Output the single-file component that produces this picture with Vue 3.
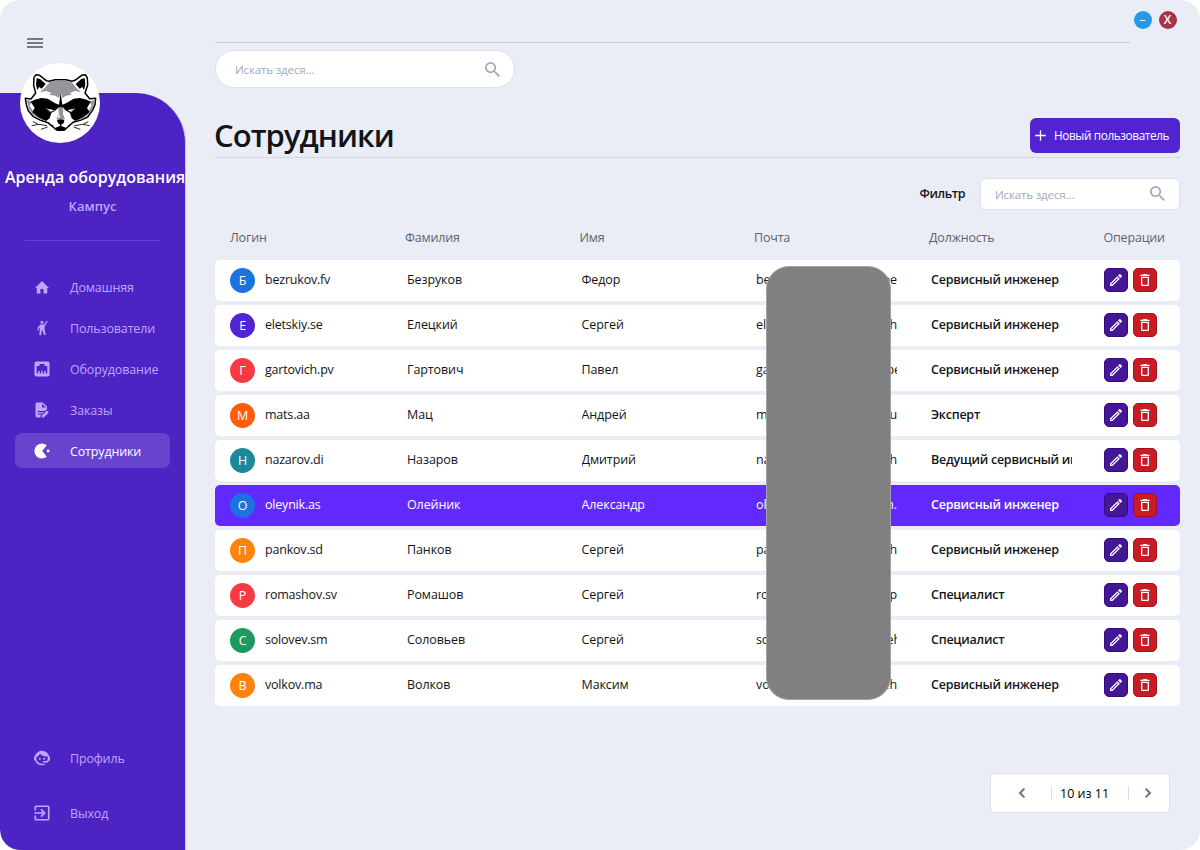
<script setup>
const menu = [
  { id: 'home', label: 'Домашняя' },
  { id: 'users', label: 'Пользователи' },
  { id: 'ethernet', label: 'Оборудование' },
  { id: 'orders', label: 'Заказы' },
  { id: 'staff', label: 'Сотрудники', active: true },
]

const headers = ['Логин', 'Фамилия', 'Имя', 'Почта', 'Должность', 'Операции']

const rows = [
  { c: 'blue', login: 'bezrukov.fv', last: 'Безруков', first: 'Федор', a: 'be', b: 'pe', role: 'Сервисный инженер' },
  { c: 'violet', login: 'eletskiy.se', last: 'Елецкий', first: 'Сергей', a: 'el', b: 'h', role: 'Сервисный инженер' },
  { c: 'red', login: 'gartovich.pv', last: 'Гартович', first: 'Павел', a: 'ga', b: 'pe', cut: true, role: 'Сервисный инженер' },
  { c: 'orange', login: 'mats.aa', last: 'Мац', first: 'Андрей', a: 'm', b: 'u', role: 'Эксперт' },
  { c: 'teal', login: 'nazarov.di', last: 'Назаров', first: 'Дмитрий', a: 'na', b: 'h', role: 'Ведущий сервисный инженер' },
  { c: 'blue', login: 'oleynik.as', last: 'Олейник', first: 'Александр', a: 'ol', b: 'm.', role: 'Сервисный инженер', selected: true },
  { c: 'amber', login: 'pankov.sd', last: 'Панков', first: 'Сергей', a: 'pa', b: 'h', role: 'Сервисный инженер' },
  { c: 'red', login: 'romashov.sv', last: 'Ромашов', first: 'Сергей', a: 'ro', b: 'p', role: 'Специалист' },
  { c: 'green', login: 'solovev.sm', last: 'Соловьев', first: 'Сергей', a: 'so', b: 'eh', cut: true, role: 'Специалист' },
  { c: 'amber', login: 'volkov.ma', last: 'Волков', first: 'Максим', a: 'vo', b: 'eh', role: 'Сервисный инженер' },
]

const magnify = 'M9.5,3A6.5,6.5 0 0,1 16,9.5C16,11.11 15.41,12.59 14.44,13.73L14.71,14H15.5L20.5,19L19,20.5L14,15.5V14.71L13.73,14.44C12.59,15.41 11.11,16 9.5,16A6.5,6.5 0 0,1 3,9.5A6.5,6.5 0 0,1 9.5,3M9.5,5C7,5 5,7 5,9.5C5,12 7,14 9.5,14C12,14 14,12 14,9.5C14,7 12,5 9.5,5Z'
</script>

<template>
  <div class="window">
    <aside class="side">
      <button class="burger"><i></i><i></i><i></i></button>
      <div class="panel">
        <div class="avatar">
          <svg viewBox="15 15 240 240">
            <g stroke-linejoin="round">
              <path fill="#fff" stroke="#000" stroke-width="4.5" d="M31 121 L48 123 L62 105 L56 82 L57 58 L63 50 L74 52 L94 68 L103 70 L120 65 L153 65 L171 70 L180 67 L200 52 L211 50 L217 60 L218 82 L210 105 L224 122 L242 121 L240 140 L232 158 L218 177 L196 187 L174 193 L158 207 L150 215 L124 215 L114 207 L99 194 L77 187 L54 175 L40 158 L34 140Z" />
              <path fill="#000" d="M65 60 L76 64 L92 78 L80 92 L72 87 L67 97 L63 80Z M209 60 L198 64 L182 78 L194 92 L202 87 L207 97 L211 80Z" />
              <path fill="#96959d" d="M104 72 L120 68 L153 68 L170 72 L182 88 L198 102 L179 99 L164 106 L171 110 L153 113 L142 120 L138 105 L132 120 L121 113 L102 110 L110 105 L93 99 L74 103 L91 88Z" />
              <path fill="#96959d" d="M35 126 L51 130 L44 143 L60 168 L94 188 L78 185 L55 171 L42 154Z M239 126 L223 130 L230 143 L214 168 L180 188 L196 185 L219 171 L232 154Z" />
              <path fill="#000" d="M47 131 L59 125 L79 120 L98 122 L121 136 L132 140 L137 104 L142 140 L153 136 L176 122 L195 120 L215 125 L227 131 L216 150 L224 162 L204 178 L181 189 L170 181 L165 165 L151 157 L145 149 L130 149 L122 157 L109 165 L104 181 L93 189 L71 178 L52 163 L59 149Z" />
              <path fill="#96959d" d="M130 148 H145 L144 168 L150 184 H124 L131 168Z M92 151 L118 157 L106 163Z M182 151 L157 157 L169 163Z" />
              <path fill="#fff" d="M98 153 L117 157 L108 160Z M176 153 L158 157 L167 160Z M132 166 L128 180 L135 178Z" />
              <path fill="#000" d="M126 186 Q137 181 148 186 L146 196 L137 201 L129 196Z M135 198 H139 V207 H135Z M121 209 L137 203 L153 209 L148 219 H126Z" />
              <path fill="none" stroke="#000" stroke-width="2.5" d="M50 203 L72 199 L96 203 M78 214 L98 207 M54 191 L69 198 M224 203 L202 199 L178 203 M196 214 L176 207 M220 191 L205 198 M107 200 L116 204 M159 204 L168 200" />
            </g>
          </svg>
        </div>
        <h2>Аренда оборудования</h2>
        <p class="sub">Кампус</p>
        <hr />
        <nav>
          <a v-for="m in menu" :key="m.id" :class="{ on: m.active }">
            <svg viewBox="0 0 16 16" fill="currentColor">
              <path v-if="m.id === 'home'" d="M6.4 14.5V10h3.2v4.5h3.6V9H15L8 2 1 9h1.8v5.5Z" />
              <g v-else-if="m.id === 'users'">
                <circle cx="8" cy="2.2" r="1.5" />
                <path d="M12.7.7 13.7 1.1 11.6 5 10.6 6v3.5l1.1 5.5H10L8.6 10.6H7.8L7 15.2H5.3L5.8 10V7.2L4.8 8.2 4.6 10.6H3.4L3.8 7.4 6.2 4.4H10.2Z" />
              </g>
              <path v-else-if="m.id === 'ethernet'" fill-rule="evenodd" d="M2.3.5H13.7Q15.5.5 15.5 2.3V13.7Q15.5 15.5 13.7 15.5H2.3Q.5 15.5.5 13.7V2.3Q.5.5 2.3.5ZM5.5 2.9V5.1H2.7V12.4H4.3V10H5.8V12.4H7.3V10H8.7V12.4H10.2V10H11.7V12.4H13.3V5.1H10.5V2.9Z" />
              <g v-else-if="m.id === 'orders'">
                <path fill-rule="evenodd" d="M2.5.5H8.8L13 4.8V6.9L11 9H3.7V10.2H9.8L8.6 11.4H3.7V12.6H7.4L6.5 13.6V15.5H3Q1.5 15.5 1.5 14V2Q1.5.5 2.5.5ZM8 1.8V5.6H11.8Z" />
                <path d="M12.9 8.6 14.8 10.4 9.7 15.5H7.8V13.6Z" />
              </g>
              <g v-else>
                <path d="M12.8 2.3A7.5 7.5 0 1 0 12.8 13.7L8.2 8Z" />
                <circle cx="14.1" cy="8" r="1.4" />
              </g>
            </svg>
            <span>{{ m.label }}</span>
          </a>
        </nav>
        <nav class="foot">
          <a>
            <svg viewBox="2 2 20 20" fill="currentColor"><path d="M18.72,14.76C19.07,13.91 19.26,13 19.26,12C19.26,11.28 19.15,10.59 18.96,9.95C18.31,10.1 17.63,10.18 16.92,10.18C13.86,10.18 11.15,8.67 9.5,6.34C8.61,8.5 6.91,10.26 4.77,11.22C4.73,11.47 4.73,11.74 4.73,12A7.27,7.27 0 0,0 12,19.27C13.05,19.27 14.06,19.04 14.97,18.63C15.54,19.72 15.8,20.26 15.78,20.26C14.14,20.81 12.87,21.08 12,21.08C9.58,21.08 7.27,20.13 5.57,18.42C4.53,17.38 3.76,16.11 3.33,14.73H2V10.18H3.09C3.93,6.04 7.6,2.92 12,2.92C14.4,2.92 16.71,3.87 18.42,5.58C19.69,6.84 20.54,8.45 20.89,10.18H22V14.73H21.94L18.38,18L13.08,17.4V15.73H17.91L18.72,14.76M9.27,11.77A1.14,1.14 0 1,1 9.27,14.04A1.14,1.14 0 1,1 9.27,11.77M14.72,11.77A1.14,1.14 0 1,1 14.72,14.04A1.14,1.14 0 1,1 14.72,11.77Z" /></svg>
            <span>Профиль</span>
          </a>
          <a>
            <svg viewBox="2.5 2.5 19 19" fill="currentColor"><path d="M19,3H5C3.89,3 3,3.89 3,5V9H5V5H19V19H5V15H3V19A2,2 0 0,0 5,21H19A2,2 0 0,0 21,19V5C21,3.89 20.1,3 19,3M10.08,15.58L11.5,17L16.5,12L11.5,7L10.08,8.41L12.67,11H3V13H12.67L10.08,15.58Z" /></svg>
            <span>Выход</span>
          </a>
        </nav>
      </div>
    </aside>

    <main>
      <div class="controls"><button class="min">–</button><button class="close">X</button></div>
      <div class="topline"></div>
      <div class="search big">
        <span>Искать здеся...</span>
        <svg viewBox="3 3 17.5 17.5"><path :d="magnify" /></svg>
      </div>
      <header>
        <h1>Сотрудники</h1>
        <button class="add">
          <svg viewBox="0 0 12 12"><path d="M6 .2V11.8M.2 6H11.8" /></svg>
          <span>Новый пользователь</span>
        </button>
      </header>
      <div class="filter">
        <b>Фильтр</b>
        <div class="search small">
          <span>Искать здеся...</span>
          <svg viewBox="3 3 17.5 17.5"><path :d="magnify" /></svg>
        </div>
      </div>

      <section class="table">
        <div class="grid head"><span v-for="h in headers" :key="h">{{ h }}</span></div>
        <div v-for="r in rows" :key="r.login" class="grid row" :class="{ selected: r.selected }">
          <div class="login"><i :class="r.c">{{ r.last[0] }}</i><span>{{ r.login }}</span></div>
          <span class="cell">{{ r.last }}</span>
          <span class="cell">{{ r.first }}</span>
          <span class="cell mail"><span>{{ r.a }}</span><span :class="{ cut: r.cut }">{{ r.b }}</span></span>
          <span class="cell role">{{ r.role }}</span>
          <div class="ops">
            <button><svg viewBox="3 3 18 18"><path d="M14.06,9L15,9.94L5.92,19H5V18.08L14.06,9M17.66,3C17.41,3 17.15,3.1 16.96,3.29L15.13,5.12L18.88,8.87L20.71,7.04C21.1,6.65 21.1,6 20.71,5.63L18.37,3.29C18.17,3.09 17.92,3 17.66,3M14.06,6.19L3,17.25V21H6.75L17.81,9.94L14.06,6.19Z" /></svg></button>
            <button class="del"><svg viewBox="3 3 18 18"><path d="M6,19A2,2 0 0,0 8,21H16A2,2 0 0,0 18,19V7H6V19M8,9H16V19H8V9M15.5,4L14.5,3H9.5L8.5,4H5V6H19V4H15.5Z" /></svg></button>
          </div>
        </div>
        <div class="cover"></div>
      </section>

      <div class="pager">
        <svg viewBox="0 0 8 10"><path d="M6.4 .6 2 5 6.4 9.4" /></svg>
        <span>10 из 11</span>
        <svg viewBox="0 0 8 10"><path d="M1.6 .6 6 5 1.6 9.4" /></svg>
      </div>
    </main>
  </div>
</template>

<style>
body { background: #fff; }
</style>

<style scoped>
* { box-sizing: border-box; }
.window {
  width: 1200px;
  height: 850px;
  display: flex;
  background: #eaedf6;
  border-radius: 20px;
  overflow: hidden;
  font-family: "Open Sans", "Noto Sans", sans-serif;
  font-size: 12.5px;
  color: #121518;
}
button { border: 0; padding: 0; font: inherit; color: inherit; }
h1, h2, p, hr { margin: 0; }
.side { width: 186px; flex: none; display: flex; flex-direction: column; }
.burger {
  width: 16px; height: 10px; margin: 38px 0 45px 27px; background: none;
  display: flex; flex-direction: column; justify-content: space-between;
}
.burger i { height: 2px; width: 16px; background: #717a88; }
.panel {
  flex: 1; display: flex; flex-direction: column;
  background: #4d23c4; border-radius: 0 50px 0 20px;
  border-right: 1px solid #c9bdf0;
}
.avatar {
  width: 80px; height: 80px; border-radius: 50%; background: #fff;
  margin: -30px 0 0 20px; flex: none;
}
.avatar svg { display: block; width: 80px; height: 80px; }
h2 {
  margin: 23px 0 0 5px; font-size: 16px; line-height: 22px; font-weight: 600;
  color: #fff; white-space: nowrap;
}
.sub { margin-top: 9px; line-height: 18px; font-size: 13px; text-align: center; font-weight: 600; color: #bea6ff; }
hr { border: 0; height: 1px; background: #673fd0; margin: 25px 25px 28px; width: 135px; flex: none; }
nav { display: flex; flex-direction: column; gap: 6px; padding: 0 0 0 15px; }
nav a {
  width: 155px; height: 35px; border-radius: 7px; display: flex; align-items: center;
  gap: 20px; padding-left: 19px; color: #bea6ff; letter-spacing: -.15px;
}
nav a svg { width: 16px; height: 16px; flex: none; }
nav a span { padding-top: 1px; }
nav a.on { background: #6843cd; color: #fff; }
.foot { margin-top: auto; gap: 20px; padding-bottom: 20px; }

main { margin-left: 29px; width: 965px; display: flex; flex-direction: column; }
.controls { height: 42px; display: flex; justify-content: flex-end; gap: 7px; padding: 11px 3.5px 0 0; flex: none; }
.controls button {
  width: 18px; height: 18px; border-radius: 50%; color: #fff; text-align: center;
  font-size: 12px; line-height: 18px; font-weight: 600;
}
.controls .min { background: #259ae6; font-weight: 400; }
.close { background: #a5364a; }
.topline { height: 1px; width: 915px; background: #c7cad1; flex: none; }
.search {
  display: flex; align-items: center; justify-content: space-between;
  background: #fff; border: 1px solid #dbe1ea; color: #a1aabb; font-size: 11.6px; letter-spacing: -.2px;
}
.search svg { width: 15px; height: 15px; fill: #a1aabb; }
.big { width: 300px; height: 38px; margin-top: 7px; border-radius: 19px; padding: 0 14px 0 19px; flex: none; }
.small { width: 200px; height: 32px; border-radius: 6px; padding: 0 14px; }
.small svg { position: relative; top: -.5px; }
header {
  height: 70px; flex: none; display: flex; justify-content: space-between; align-items: flex-start;
  border-bottom: 1px solid #d2d7e1; padding-top: 24px;
}
h1 { font-size: 31px; line-height: 46px; font-weight: 600; letter-spacing: -.95px; margin-left: -1px; }
.add {
  width: 150px; height: 35px; margin-top: 6px; border-radius: 6px; background: #5124cf; color: #fff;
  display: flex; align-items: center; gap: 8px; padding-left: 5px; font-size: 11.8px; letter-spacing: -.4px; white-space: nowrap;
}
.add span { padding-bottom: 2px; }
.add svg { width: 11px; height: 11px; fill: none; stroke: #fff; stroke-width: 1.4; }
.filter { display: flex; justify-content: flex-end; align-items: center; gap: 15px; margin-top: 20px; height: 32px; flex: none; }
.filter b { font-weight: 600; letter-spacing: -.45px; padding-bottom: 2px; }
.table { position: relative; display: flex; flex-direction: column; gap: 4px; }
.grid { display: grid; grid-template-columns: 175px 174.5px 174.5px 175px 174.5px 1fr; padding-left: 15px; align-items: center; white-space: nowrap; letter-spacing: -.1px; }
.head { height: 46px; padding-top: 8px; color: #5c6472; letter-spacing: -.18px; }
.row { height: 41px; background: #fff; border-radius: 5px; }
.row.selected { background: #6229ff; color: #fff; }
.login { display: flex; align-items: center; gap: 10px; letter-spacing: -.2px; }
.login span, .cell { position: relative; top: -1px; }
.login i {
  width: 25px; height: 25px; border-radius: 50%; color: #fff; font-style: normal; text-align: center; line-height: 25px;
}
.blue { background: #1b72e0; }
.violet { background: #5024d0; }
.red { background: #f93a43; }
.orange { background: #fc5c0b; }
.teal { background: #1a8a9b; }
.amber { background: #fd830b; }
.green { background: #1e9a60; }
.cell { margin-left: 2px; width: 141px; overflow: hidden; }
.mail { display: flex; justify-content: space-between; }
.cut { margin-right: -4px; }
.role { font-weight: 600; letter-spacing: -.24px; }
.ops { display: flex; gap: 5px; padding-bottom: 1px; }
.ops button {
  width: 24px; height: 24px; border-radius: 5px; background: #431795; border: 1px solid #350a7c;
  display: flex; align-items: center; justify-content: center;
}
.ops .del { background: #c71b25; border-color: #a90f1a; }
.ops svg { width: 12px; height: 12px; fill: #fff; }
.cover {
  position: absolute; left: 551px; top: 56px; width: 125px; height: 434px;
  background: #808080; border: 1px solid #a3a3a3; border-radius: 23px;
}
.pager {
  width: 180px; height: 40px; margin: auto 10px 37px auto; border: 1px solid #dbe1ea; border-radius: 5px;
  background: #fff; color: #000; display: flex; align-items: center; padding: 0 17px 0 27px; justify-content: space-between;
}
.pager svg { width: 8px; height: 10px; fill: none; stroke: #6c7685; stroke-width: 2; }
.pager span { border: solid #d8dee8; border-width: 0 1px; width: 78px; height: 14px; line-height: 16px; padding-left: 8px; margin-left: 10px; }
</style>
